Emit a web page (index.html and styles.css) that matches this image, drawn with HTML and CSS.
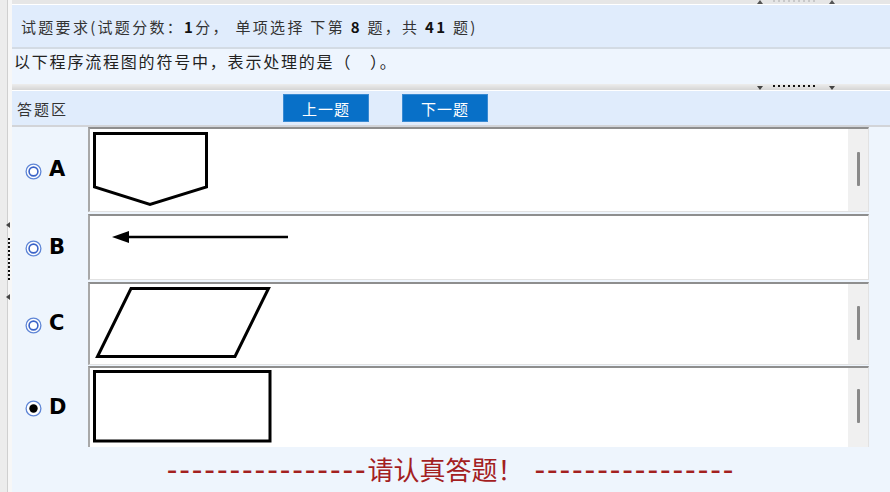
FILE: index.html
```html
<!DOCTYPE html>
<html lang="zh-CN">
<head>
<meta charset="utf-8">
<title>答题</title>
<link rel="stylesheet" href="styles.css">
</head>
<body>
<div class="app">
  <div class="vsplit">
    <span class="tri-left"></span>
    <span class="vdots"><i></i><i></i><i></i><i></i><i></i><i></i><i></i><i></i><i></i><i></i><i></i></span>
    <span class="tri-left"></span>
  </div>
  <div class="main">
    <div class="tsplit">
      <span class="tri-up"></span>
      <span class="hdots light"><i></i><i></i><i></i><i></i><i></i><i></i><i></i><i></i><i></i></span>
      <span class="tri-up"></span>
    </div>
    <div class="header">试题要求(试题分数：<b>1</b>分， 单项选择 下第 <b>8</b> 题，共 <b>41</b> 题)</div>
    <div class="question">以下程序流程图的符号中，表示处理的是（　）。</div>
    <div class="msplit">
      <span class="tri-down"></span>
      <span class="hdots"><i></i><i></i><i></i><i></i><i></i><i></i><i></i><i></i><i></i></span>
      <span class="tri-down"></span>
    </div>
    <div class="bar">
      <span class="bar-label">答题区</span>
      <span class="btn">上一题</span>
      <span class="btn">下一题</span>
    </div>
    <div class="options">
      <div class="row row-a">
        <div class="label">
          <svg class="radio" width="17" height="17" viewBox="0 0 17 17"><circle cx="8.5" cy="8.5" r="7.4" fill="#fff" stroke="#5f86d6" stroke-width="1.3"/><circle cx="8.5" cy="8.5" r="4.4" fill="none" stroke="#3a63c8" stroke-width="1.6"/></svg>
          <span class="letter">A</span>
        </div>
        <div class="box">
          <div class="canvas">
            <svg width="130" height="82" viewBox="0 0 130 82"><polygon points="4.5,4.5 116.5,4.5 116.5,58 60,75.5 4.5,58" fill="#fff" stroke="#000" stroke-width="3"/></svg>
          </div>
          <div class="scroll"><span class="thumb"></span></div>
        </div>
      </div>
      <div class="row row-b">
        <div class="label">
          <svg class="radio" width="17" height="17" viewBox="0 0 17 17"><circle cx="8.5" cy="8.5" r="7.4" fill="#fff" stroke="#5f86d6" stroke-width="1.3"/><circle cx="8.5" cy="8.5" r="4.4" fill="none" stroke="#3a63c8" stroke-width="1.6"/></svg>
          <span class="letter">B</span>
        </div>
        <div class="box">
          <div class="canvas">
            <svg width="210" height="60" viewBox="0 0 210 60"><line x1="34" y1="21" x2="198" y2="21" stroke="#000" stroke-width="2.5"/><polygon points="22,21 39,15 39,27" fill="#000"/></svg>
          </div>
        </div>
      </div>
      <div class="row row-c">
        <div class="label">
          <svg class="radio" width="17" height="17" viewBox="0 0 17 17"><circle cx="8.5" cy="8.5" r="7.4" fill="#fff" stroke="#5f86d6" stroke-width="1.3"/><circle cx="8.5" cy="8.5" r="4.4" fill="none" stroke="#3a63c8" stroke-width="1.6"/></svg>
          <span class="letter">C</span>
        </div>
        <div class="box">
          <div class="canvas">
            <svg width="190" height="80" viewBox="0 0 190 80"><polygon points="41,4.5 178.5,4.5 145,72.5 7.5,72.5" fill="#fff" stroke="#000" stroke-width="3"/></svg>
          </div>
          <div class="scroll"><span class="thumb"></span></div>
        </div>
      </div>
      <div class="row row-d">
        <div class="label">
          <svg class="radio" width="17" height="17" viewBox="0 0 17 17"><circle cx="8.5" cy="8.5" r="7.4" fill="#fff" stroke="#5f86d6" stroke-width="1.3"/><circle cx="8.5" cy="8.5" r="4.2" fill="#000"/></svg>
          <span class="letter">D</span>
        </div>
        <div class="box">
          <div class="canvas">
            <svg width="190" height="79" viewBox="0 0 190 79"><rect x="4.5" y="3.5" width="175.5" height="69.5" fill="#fff" stroke="#000" stroke-width="3"/></svg>
          </div>
          <div class="scroll"><span class="thumb"></span></div>
        </div>
      </div>
    </div>
    <div class="footer"><div class="footer-text"><span class="dashes">----------------</span><span class="warn">请认真答题！</span><span class="dashes"> ----------------</span></div></div>
  </div>
</div>
</body>
</html>
```
FILE: styles.css
```css
* { box-sizing: border-box; }

body {
  margin: 0;
  width: 890px;
  height: 492px;
  overflow: hidden;
  background: #f0f0f0;
  font-family: "Noto Sans CJK SC", "Microsoft YaHei", sans-serif;
  color: #222;
}

.app {
  display: flex;
  height: 492px;
}

/* left splitter */
.vsplit {
  flex: 0 0 12px;
  background: linear-gradient(to right, #ececec 0 7px, #cfcfcf 7px 8px, #f7f7f7 8px 12px);
  display: flex;
  flex-direction: column;
  align-items: flex-start;
  padding-top: 222px;
  padding-left: 6px;
}

.tri-left {
  width: 0;
  height: 0;
  border-top: 3px solid transparent;
  border-bottom: 3px solid transparent;
  border-right: 4px solid #444;
}

.vdots {
  display: flex;
  flex-direction: column;
  gap: 2px;
  margin: 10px 0 14px 2px;
}

.vdots i {
  display: block;
  width: 2px;
  height: 2px;
  background: #111;
}

.main {
  flex: 1;
  min-width: 0;
  display: flex;
  flex-direction: column;
}

/* top splitter */
.tsplit {
  height: 5px;
  background: #e6e6e6;
  border-bottom: 1px solid #fff;
  display: flex;
  justify-content: flex-end;
  align-items: flex-start;
  padding-right: 55px;
}

.tri-up {
  width: 0;
  height: 0;
  border-left: 3px solid transparent;
  border-right: 3px solid transparent;
  border-bottom: 4px solid #555;
}

.hdots {
  display: flex;
  gap: 3px;
  margin: 0 14px 0 10px;
}

.hdots i {
  display: block;
  width: 2px;
  height: 2px;
  background: #111;
}

.hdots.light i { background: #c8c8c8; }

.header {
  height: 44px;
  background: #e0ecfc;
  border-bottom: 2px solid #d3dbe4;
  display: flex;
  align-items: center;
  padding-left: 9px;
  padding-top: 1px;
  font-size: 15px;
  letter-spacing: 2.3px;
  color: #333;
  white-space: pre;
}

.header b { font-weight: 700; color: #111; }

.question {
  height: 35px;
  background: #eef5fe;
  padding: 1px 0 0 2px;
  font-size: 16px;
  line-height: 22px;
  letter-spacing: 1.8px;
  color: #222;
}

/* middle splitter */
.msplit {
  height: 7px;
  background: linear-gradient(#ededed, #d5d5d5);
  border-bottom: 1px solid #fff;
  display: flex;
  justify-content: flex-end;
  align-items: flex-start;
  padding: 1px 55px 0 0;
}

.tri-down {
  margin-top: 1px;
  width: 0;
  height: 0;
  border-left: 3px solid transparent;
  border-right: 3px solid transparent;
  border-top: 4px solid #444;
}

/* answer bar */
.bar {
  height: 36px;
  background: #e0ecfc;
  border-bottom: 2px solid #d2d4d8;
  display: flex;
  align-items: center;
  padding-left: 5px;
}

.bar-label {
  flex: 0 0 266px;
  font-size: 15px;
  letter-spacing: 2px;
  color: #333;
}

.btn {
  flex: 0 0 86px;
  height: 28px;
  background: #0870c8;
  border: 1px solid #3a8ad2;
  color: #fff;
  font-size: 15px;
  letter-spacing: 1px;
  display: flex;
  align-items: center;
  justify-content: center;
}

.btn + .btn { margin-left: 33px; }

/* options */
.options {
  background: #eef5fd;
  display: flex;
  flex-direction: column;
  gap: 2px;
}

.row {
  display: grid;
  grid-template-columns: 76px 781px;
}

.row-a { height: 85px; }
.row-b { height: 66px; }
.row-c { height: 82px; }
.row-d { height: 81px; }

.label {
  display: flex;
  align-items: center;
  gap: 7px;
  padding-left: 13px;
}

.radio { flex: 0 0 17px; margin-top: 3px; }

.letter {
  font-family: "DejaVu Sans", Verdana, sans-serif;
  font-weight: 700;
  font-size: 21px;
  color: #000;
  line-height: 1;
}

.box {
  display: flex;
  background: #fff;
  border-top: 2px solid #8e8e8e;
  border-left: 2px solid #a8a8a8;
  border-right: 1px solid #e2e2e2;
  border-bottom: 1px solid #e2e2e2;
}

.canvas {
  flex: 1;
  overflow: hidden;
}

.canvas svg { display: block; }

.scroll {
  flex: 0 0 20px;
  background: #f0f0f0;
  display: flex;
  align-items: center;
  justify-content: center;
  padding-bottom: 3px;
}

.thumb {
  display: block;
  width: 3px;
  height: 34px;
  background: #8a8a8a;
  border-radius: 1px;
}

/* footer */
.footer {
  flex: 1;
  background: #eef5fd;
  display: flex;
  align-items: center;
  justify-content: center;
  color: #a3201f;
  padding-bottom: 1px;
}

.footer-text {
  white-space: pre;
  line-height: 28px;
  font-size: 26px;
}

.dashes {
  font-family: "Liberation Sans", Arial, sans-serif;
  font-size: 32px;
  letter-spacing: 1.9px;
  line-height: 0;
}

.warn {
  font-size: 26px;
}
```
